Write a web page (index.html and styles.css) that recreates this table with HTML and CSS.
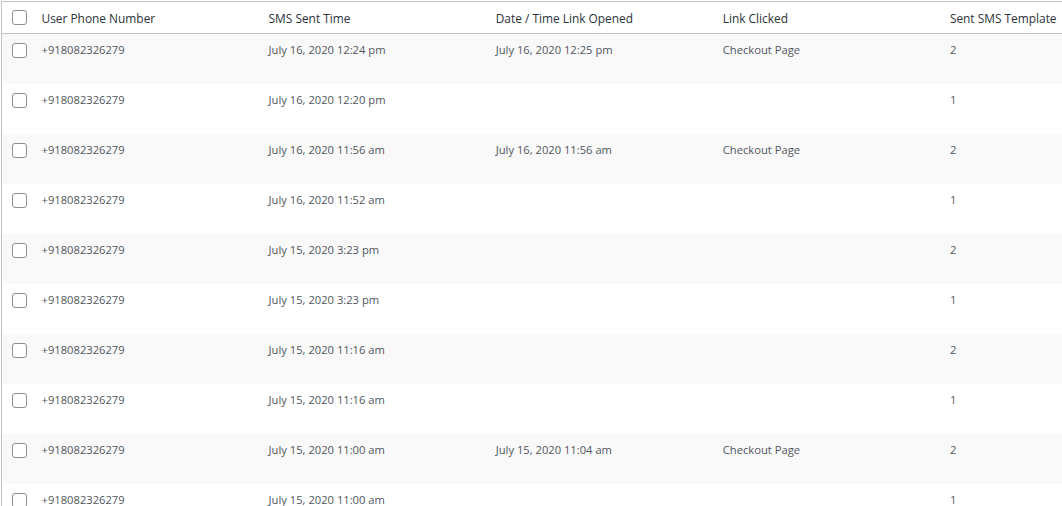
FILE: index.html
```html
<!DOCTYPE html>
<html>
<head>
<meta charset="utf-8">
<link rel="stylesheet" href="styles.css">
</head>
<body>
<div class="wrap">
<table class="list">
<colgroup><col class="c-cb"><col class="c"><col class="c"><col class="c"><col class="c"><col class="c"></colgroup>
<thead>
<tr><th class="cb"><span class="box"></span></th><th>User Phone Number</th><th>SMS Sent Time</th><th>Date / Time Link Opened</th><th>Link Clicked</th><th>Sent SMS Template</th></tr>
</thead>
<tbody>
<tr class="alt"><td class="cb"><span class="box"></span></td><td>+918082326279</td><td>July 16, 2020 12:24 pm</td><td>July 16, 2020 12:25 pm</td><td>Checkout Page</td><td>2</td></tr>
<tr><td class="cb"><span class="box"></span></td><td>+918082326279</td><td>July 16, 2020 12:20 pm</td><td></td><td></td><td>1</td></tr>
<tr class="alt"><td class="cb"><span class="box"></span></td><td>+918082326279</td><td>July 16, 2020 11:56 am</td><td>July 16, 2020 11:56 am</td><td>Checkout Page</td><td>2</td></tr>
<tr><td class="cb"><span class="box"></span></td><td>+918082326279</td><td>July 16, 2020 11:52 am</td><td></td><td></td><td>1</td></tr>
<tr class="alt"><td class="cb"><span class="box"></span></td><td>+918082326279</td><td>July 15, 2020 3:23 pm</td><td></td><td></td><td>2</td></tr>
<tr><td class="cb"><span class="box"></span></td><td>+918082326279</td><td>July 15, 2020 3:23 pm</td><td></td><td></td><td>1</td></tr>
<tr class="alt"><td class="cb"><span class="box"></span></td><td>+918082326279</td><td>July 15, 2020 11:16 am</td><td></td><td></td><td>2</td></tr>
<tr><td class="cb"><span class="box"></span></td><td>+918082326279</td><td>July 15, 2020 11:16 am</td><td></td><td></td><td>1</td></tr>
<tr class="alt"><td class="cb"><span class="box"></span></td><td>+918082326279</td><td>July 15, 2020 11:00 am</td><td>July 15, 2020 11:04 am</td><td>Checkout Page</td><td>2</td></tr>
<tr><td class="cb"><span class="box"></span></td><td>+918082326279</td><td>July 15, 2020 11:00 am</td><td></td><td></td><td>1</td></tr>
</tbody>
</table>
</div>
</body>
</html>
```
FILE: styles.css
```css
html, body {
  margin: 0;
  padding: 0;
  background: #ffffff;
  overflow: hidden;
}
.wrap {
  padding: 1px 0 0 1px;
}
.list {
  border-collapse: collapse;
  table-layout: fixed;
  width: 1167px;
  border-top: 1px solid #c3c4c7;
  border-left: 1px solid #c3c4c7;
  font-family: "Open Sans", "Noto Sans", sans-serif;
}
.c-cb { width: 31px; }
.c { width: 227px; }
th, td {
  text-align: left;
  vertical-align: top;
  padding: 0 7px 0 9px;
  white-space: nowrap;
  overflow: hidden;
}
th {
  height: 30px;
  padding-top: 1px;
  font-weight: 400;
  font-size: 11.9px;
  color: #2c3338;
  line-height: 30px;
  border-bottom: 1px solid #c3c4c7;
  box-sizing: border-box;
}
td {
  height: 50px;
  font-size: 11.2px;
  color: #50575e;
  line-height: 16px;
  padding-top: 8px;
  padding-bottom: 0;
  box-sizing: border-box;
}
tr.alt td { background: #f9f9f9; }
th.cb, td.cb {
  padding: 0 0 0 10px;
}
td.cb { padding-top: 9px; }
th.cb { vertical-align: middle; }
.box {
  display: block;
  width: 13px;
  height: 13px;
  border: 1px solid #8c8f94;
  border-radius: 3px;
  background: #fff;
}
```
